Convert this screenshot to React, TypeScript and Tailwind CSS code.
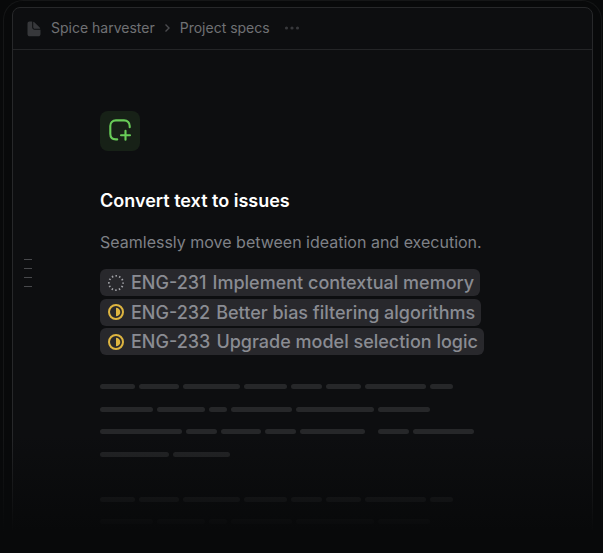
import { ReactNode } from "react";

const PARAGRAPH_ONE = [
  "w-[35px]", "w-10", "w-[57px]", "w-[43px]", "w-[31px]", "w-[35px]", "w-[61px]", "w-[23px]",
];
const PARAGRAPH_TWO = ["w-[53px]", "w-12", "w-[18px]", "w-[61px]", "w-[78px]", "w-[52px]"];
const PARAGRAPH_THREE = [
  "w-[82px]", "w-[31px]", "w-10", "w-[31px]", "w-[65px] mr-[9px]", "w-[31px]", "w-[61px]",
];
const LINES: string[][] = [
  PARAGRAPH_ONE,
  PARAGRAPH_TWO,
  PARAGRAPH_THREE,
  ["w-[69px]", "w-[57px]"],
  [],
  PARAGRAPH_ONE,
  PARAGRAPH_TWO,
];

function DocumentIcon() {
  return (
    <svg width="14" height="16" viewBox="0 0 14 16" fill="#37383b" aria-hidden="true">
      <path d="M2.5 0.5H5.2V6.3C5.2 7.8 6.2 8.8 7.7 8.8H13.5V13C13.5 14.4 12.6 15.3 11.2 15.3H2.8C1.4 15.3 0.5 14.4 0.5 13V2.5C0.5 1.3 1.3 0.5 2.5 0.5Z" />
      <path d="M6.2 0.8C6.8 0.9 7.2 1.1 7.6 1.5L12.5 6.2C12.9 6.6 13.1 7 13.3 7.8H8.1C6.9 7.8 6.2 7.1 6.2 5.9Z" />
    </svg>
  );
}

function AddIssueIcon() {
  return (
    <svg width="24" height="24" viewBox="-0.7 0.4 24 24" fill="none" stroke="#68cc58" strokeWidth="2.1" strokeLinecap="round" aria-hidden="true">
      <path d="M21 8.6V7.4C21 4 18.8 1.8 15.4 1.8H7.2C3.8 1.8 1.6 4 1.6 7.4V15.2C1.6 18.6 3.8 20.8 7.2 20.8H8.5" />
      <path d="M16.8 12.2V21.2M12.3 16.7H21.3" />
    </svg>
  );
}

function BacklogIcon() {
  return (
    <svg width="16" height="16" viewBox="0 0 16 16" fill="none" aria-hidden="true">
      <circle cx="8" cy="8" r="7.1" stroke="#a0a1a6" strokeWidth="1.8" strokeDasharray="1.5 2.217" strokeDashoffset="0.75" />
    </svg>
  );
}

function InProgressIcon() {
  return (
    <svg width="16" height="16" viewBox="0 0 16 16" fill="none" aria-hidden="true">
      <circle cx="8" cy="8" r="7" stroke="#deb540" strokeWidth="2" />
      <path d="M8 3.7A4.3 4.3 0 0 1 8 12.3Z" fill="#deb540" />
    </svg>
  );
}

function Issue({ id, title, icon }: { id: string; title: string; icon: ReactNode }) {
  return (
    <li className="flex h-[27px] items-center rounded-md bg-[#28282c] pr-1.5 pl-2 text-lg leading-[27px] font-medium whitespace-nowrap text-[#8a8c93]">
      {icon}
      <span className="ml-[7px]">{id}</span>
      <span className="ml-1.5">{title}</span>
    </li>
  );
}

export default function App() {
  return (
    <div className="relative h-screen overflow-hidden bg-[#08090a] pr-px pl-[3px] font-['Inter',sans-serif]">
      <div className="h-full rounded-t-[20px] border-x border-t border-[#151617] px-2 pt-1.5">
        <main className="h-full rounded-t-lg border border-[#27282a] bg-[#0d0e10]">
          <header className="flex h-[42px] items-center border-b border-[#242527] pl-3.5 text-sm leading-5 text-[#707174]">
            <DocumentIcon />
            <nav aria-label="Breadcrumb" className="ml-2.5 flex items-center pb-0.5">
              <a href="#spice-harvester">Spice harvester</a>
              <svg className="mx-2" width="9" height="10" viewBox="0 0 9 10" fill="none" stroke="#4b4c4f" strokeWidth="1.4" aria-hidden="true">
                <path d="M2.5 1.5L6 5L2.5 8.5" />
              </svg>
              <a href="#project-specs">Project specs</a>
            </nav>
            <button type="button" aria-label="More options" className="ml-3.5 pb-0.5">
              <svg width="16" height="4" viewBox="0 0 16 4" fill="#37383b" aria-hidden="true">
                <circle cx="2.5" cy="2" r="1.6" />
                <circle cx="8" cy="2" r="1.6" />
                <circle cx="13.5" cy="2" r="1.6" />
              </svg>
            </button>
          </header>
          <div className="flex">
            <div className="flex w-[87px] flex-col gap-2 pt-[209px] pl-[11px]" aria-hidden="true">
              <span className="h-px w-2 bg-[#48494c]" />
              <span className="h-px w-2 bg-[#48494c]" />
              <span className="h-px w-2 bg-[#48494c]" />
              <span className="h-px w-2 bg-[#48494c]" />
            </div>
            <article className="flex-1 pt-[61px]">
              <div className="flex size-10 items-center justify-center rounded-lg bg-[#172117]">
                <AddIssueIcon />
              </div>
              <h1 className="mt-9 text-lg leading-7 font-semibold text-white">Convert text to issues</h1>
              <p className="mt-[13px] text-base leading-7 text-[#7f8187]">
                Seamlessly move between ideation and execution.
              </p>
              <ul className="mt-[13px] flex h-[86px] flex-col items-start justify-between">
                <Issue id="ENG-231" title="Implement contextual memory" icon={<BacklogIcon />} />
                <Issue id="ENG-232" title="Better bias filtering algorithms" icon={<InProgressIcon />} />
                <Issue id="ENG-233" title="Upgrade model selection logic" icon={<InProgressIcon />} />
              </ul>
              <div className="mt-[29px] flex h-[140px] flex-col justify-between" aria-hidden="true">
                {LINES.map((line, i) => (
                  <div key={i} className="flex h-[5px] gap-1">
                    {line.map((width, j) => (
                      <span key={j} className={`h-full rounded-full bg-[#262729] ${width}`} />
                    ))}
                  </div>
                ))}
              </div>
            </article>
          </div>
        </main>
      </div>
      <div className="pointer-events-none absolute inset-x-0 bottom-0 h-[118px] bg-linear-to-b from-transparent to-[#08090a] to-82%" />
    </div>
  );
}
